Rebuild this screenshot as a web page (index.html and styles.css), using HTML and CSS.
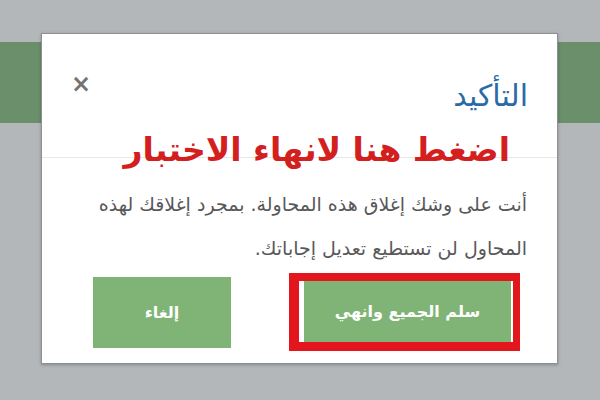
FILE: index.html
```html
<!DOCTYPE html>
<html lang="ar">
<head>
  <meta charset="UTF-8" />
  <meta name="viewport" content="width=device-width, initial-scale=1.0" />
  <title>التأكيد</title>
  <link rel="stylesheet" href="styles.css">
</head>
<body>
  <div class="page">
    <div class="band"></div>
  </div>

  <div class="modal" dir="rtl">
    <div class="modal-header">
      <h2 class="modal-title">التأكيد</h2>
      <button class="close" type="button">&times;</button>
    </div>
    <p class="notice">اضغط هنا لانهاء الاختبار</p>
    <p class="modal-body">أنت على وشك إغلاق هذه المحاولة. بمجرد إغلاقك لهذه المحاول لن تستطيع تعديل إجاباتك.</p>
    <div class="modal-footer">
      <div class="highlight">
        <button class="btn" type="button">سلم الجميع وانهي</button>
      </div>
      <button class="btn btn-cancel" type="button">إلغاء</button>
    </div>
  </div>
</body>
</html>
```

FILE: styles.css
```css
body {
  margin: 0;
  background: #b4b7b9;
  font-family: "DejaVu Sans", sans-serif;
}
.page {
  height: 400px;
  padding-top: 42px;
  box-sizing: border-box;
}
.band {
  height: 81px;
  background: #6b8f6a;
}
.modal {
  position: absolute;
  left: 41px;
  top: 33px;
  width: 517px;
  height: 331px;
  box-sizing: border-box;
  background: #fff;
  border: 1px solid #8e9193;
  box-shadow: 0 1px 3px rgba(0,0,0,0.25);
}
.modal-header {
  display: flex;
  justify-content: space-between;
  align-items: flex-start;
  padding: 42px 29px 0 29px;
  height: 124px;
  box-sizing: border-box;
  border-bottom: 1px solid #e8e8e8;
}
.modal-title {
  margin: 0;
  font-size: 30px;
  font-weight: normal;
  color: #2b6aa6;
  line-height: 40px;
}
.close {
  border: 0;
  background: none;
  padding: 0;
  margin-top: -4px;
  font-family: "DejaVu Sans", sans-serif;
  font-size: 24px;
  font-weight: bold;
  line-height: 24px;
  color: #737373;
}
.notice {
  margin: -30px 47px 0 0;
  font-size: 33px;
  font-weight: bold;
  color: #d3201f;
  line-height: 44px;
}
.modal-body {
  margin: 10px 30px 0 33px;
  font-size: 19px;
  line-height: 44px;
  color: #585858;
}
.modal-footer {
  display: flex;
  justify-content: space-between;
  align-items: center;
  padding: 0 37px 0 51px;
  margin-top: 3px;
}
.highlight {
  border: 8px solid #e3161e;
  border-right-width: 7px;
  border-bottom-width: 9px;
  border-left-width: 10px;
  padding: 0 2px 0 5px;
  background: #fff;
}
.btn {
  display: block;
  border: 0;
  background: #80b476;
  color: #fff;
  font-family: "DejaVu Sans", sans-serif;
  font-size: 16px;
  font-weight: bold;
  width: 207px;
  height: 61px;
}
.btn-cancel {
  width: 138px;
  height: 71px;
}
```
